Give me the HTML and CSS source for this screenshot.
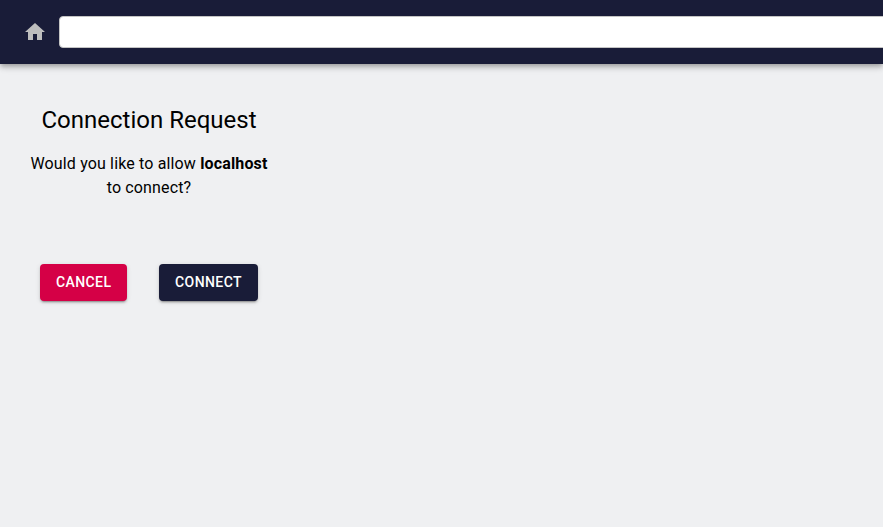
FILE: index.html
```html
<!DOCTYPE html>
<html lang="en">
<head>
<meta charset="utf-8">
<title>Connection Request</title>
<link rel="stylesheet" href="styles.css">
</head>
<body>
<header class="app-bar">
  <svg class="home" viewBox="0 0 24 24" aria-hidden="true"><path d="M10 20v-6h4v6h5v-8h3L12 3 2 12h3v8z"/></svg>
  <div class="address"></div>
</header>
<main class="request">
  <h1 class="title">Connection Request</h1>
  <p class="message">Would you like to allow <b>localhost</b> to connect?</p>
  <div class="actions">
    <button class="button cancel">Cancel</button>
    <button class="button connect">Connect</button>
  </div>
</main>
</body>
</html>
```
FILE: styles.css
```css
* { box-sizing: border-box; }
body {
  margin: 0;
  height: 100vh;
  overflow: hidden;
  background: #eff0f2;
  color: #000;
  font-family: Roboto, sans-serif;
}
.app-bar {
  display: flex;
  align-items: center;
  height: 64px;
  padding-left: 23px;
  background: #191c38;
  box-shadow: 0 2px 4px -1px rgba(0,0,0,.2), 0 4px 5px rgba(0,0,0,.14), 0 1px 10px rgba(0,0,0,.12);
}
.home { flex: none; width: 24px; height: 24px; fill: #bdbdbd; }
.address {
  flex: 1;
  height: 32px;
  margin: 0 -10px 0 12px;
  background: #fff;
  border: 1px solid #c4c4c4;
  border-radius: 4px;
}
.request {
  width: 298px;
  padding: 40px 24px 0;
  text-align: center;
}
.title { margin: 0; font-size: 24px; font-weight: 400; line-height: 32px; }
.message { margin: 16px 0 0; font-size: 16px; line-height: 24px; letter-spacing: .15px; }
.actions { display: flex; justify-content: center; gap: 32px; margin-top: 64px; }
.button {
  height: 37px;
  padding: 0 16px 1px;
  border: 0;
  border-radius: 4px;
  color: #fff;
  font: 500 14px/24px Roboto, sans-serif;
  letter-spacing: .4px;
  text-transform: uppercase;
  box-shadow: 0 3px 1px -2px rgba(0,0,0,.2), 0 2px 2px rgba(0,0,0,.14), 0 1px 5px rgba(0,0,0,.12);
}
.cancel { width: 87px; background: #d50046; }
.connect { width: 99px; background: #191c38; }
```
